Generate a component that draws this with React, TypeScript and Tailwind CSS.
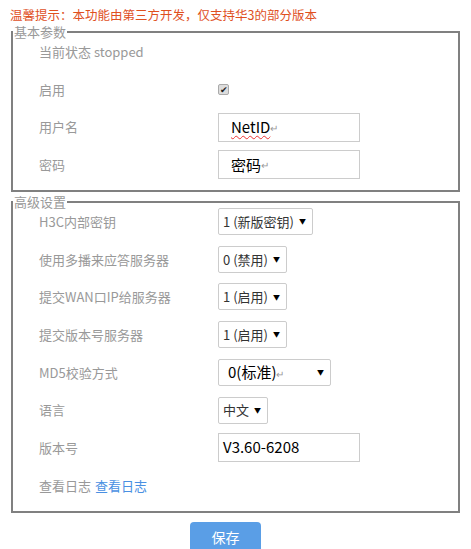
const FONT = "font-['Microsoft_YaHei','Noto_Sans_CJK_SC','Noto_Sans',sans-serif]";

type Row =
  | { label: string; kind: "text" }
  | { label: string; kind: "check" }
  | { label: string; kind: "input"; value: string; mark?: boolean; squiggle?: boolean }
  | { label: string; kind: "select"; value: string; width: string; mark?: boolean }
  | { label: string; kind: "link"; value: string };

const BASIC: Row[] = [
  { label: "当前状态 stopped", kind: "text" },
  { label: "启用", kind: "check" },
  { label: "用户名", kind: "input", value: "NetID", mark: true, squiggle: true },
  { label: "密码", kind: "input", value: "密码", mark: true },
];

const ADVANCED: Row[] = [
  { label: "H3C内部密钥", kind: "select", value: "1 (新版密钥)", width: "min-w-[92px]" },
  { label: "使用多播来应答服务器", kind: "select", value: "0 (禁用)", width: "min-w-[67px]" },
  { label: "提交WAN口IP给服务器", kind: "select", value: "1 (启用)", width: "min-w-[67px]" },
  { label: "提交版本号服务器", kind: "select", value: "1 (启用)", width: "min-w-[67px]" },
  { label: "MD5校验方式", kind: "select", value: "0(标准)", width: "min-w-[113px]", mark: true },
  { label: "语言", kind: "select", value: "中文", width: "min-w-[47px]" },
  { label: "版本号", kind: "input", value: "V3.60-6208" },
  { label: "查看日志", kind: "link", value: "查看日志" },
];

function Control({ row }: { row: Row }) {
  if (row.kind === "check") {
    return (
      <span className="flex h-[11px] w-[11px] items-center justify-center rounded-[2px] border border-[#aaa] bg-[#ddd] text-[9px] leading-none text-[#222]">
        ✔
      </span>
    );
  }
  if (row.kind === "input") {
    return (
      <div className="flex h-[29px] w-[142px] items-center border border-[#ccc] bg-white pl-[4px] text-[15px] text-black">
        <span className={row.squiggle ? "underline decoration-wavy decoration-[#e33] decoration-1 underline-offset-2 pl-[8px]" : row.mark ? "pl-[8px]" : ""}>
          {row.value}
        </span>
        {row.mark && <span className="text-[10px] text-[#999]">↵</span>}
      </div>
    );
  }
  if (row.kind === "select") {
    return (
      <div
        className={`flex h-[27px] ${row.width} items-center justify-between gap-[5px] rounded-[2px] border border-[#ccc] bg-white pl-[4px] pr-[6px] ${
          row.mark ? "text-[15px] text-black" : "text-[13px] text-[#333]"
        }`}
      >
        <span className={row.mark ? "pl-[5px]" : ""}>
          {row.value}
          {row.mark && <span className="text-[10px] text-[#999]">↵</span>}
        </span>
        <span className="text-[7px] text-black">▼</span>
      </div>
    );
  }
  return null;
}

function Section({ title, rows, pad }: { title: string; rows: Row[]; pad: string }) {
  return (
    <fieldset className={`mx-[11px] border-2 border-[#808080] ${pad}`}>
      <legend className="px-[1px] text-[13px] leading-[14px] text-[#999]">{title}</legend>
      <div className="-mt-[6px] flex flex-col">
        {rows.map((row) => (
          <div key={row.label} className="flex h-[37.7px] items-center">
            <div className="w-[205px] shrink-0 pl-[26px] text-[13px] text-[#999]">
              {row.label}
              {row.kind === "link" && <span className="ml-[4px] text-[#4a90e2]">{row.value}</span>}
            </div>
            <Control row={row} />
          </div>
        ))}
      </div>
    </fieldset>
  );
}

export default function App() {
  return (
    <div className={`${FONT} h-[549px] w-[471px] overflow-hidden bg-white`}>
      <p className="px-[10px] pt-[7px] pb-[1px] text-[12.5px] leading-[16px] text-[#e0501e]">
        温馨提示：本功能由第三方开发，仅支持华3的部分版本
      </p>
      <div className="mt-[1px] flex flex-col gap-[3px]">
        <Section title="基本参数" rows={BASIC} pad="pb-[6px]" />
        <Section title="高级设置" rows={ADVANCED} pad="pb-[7px]" />
      </div>
      <div className="mt-[9px] flex pl-[190px]">
        <button className="h-[34px] w-[71px] rounded-[4px] bg-[#5a9ee6] pb-[4px] text-[14px] text-white">保存</button>
      </div>
    </div>
  );
}
